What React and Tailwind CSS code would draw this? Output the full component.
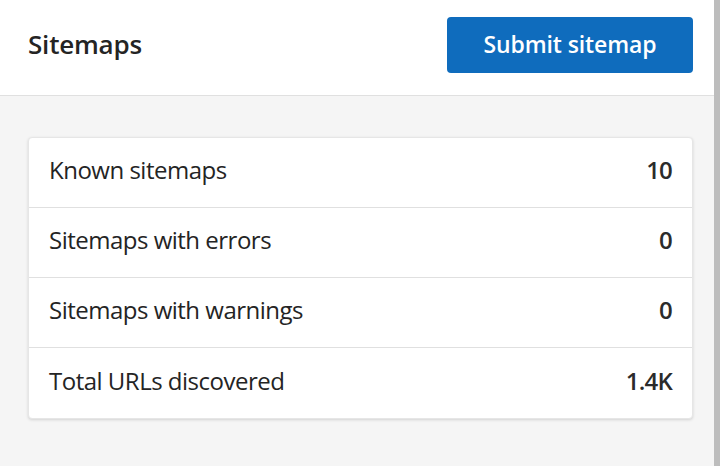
const rows = [
  { label: "Known sitemaps", value: "10" },
  { label: "Sitemaps with errors", value: "0" },
  { label: "Sitemaps with warnings", value: "0" },
  { label: "Total URLs discovered", value: "1.4K" },
];

export default function App() {
  return (
    <div className="flex h-[466px] w-[720px] overflow-hidden bg-[#f5f5f5] font-['Open_Sans',sans-serif] text-[#242424]">
      <div className="flex flex-1 flex-col">
        <header className="flex h-[96px] items-center justify-between border-b border-[#e0e0e0] bg-white pb-[6px] pl-[28px] pr-[21px]">
          <h1 className="text-[26px] font-semibold tracking-[-0.2px]">Sitemaps</h1>
          <button className="h-[56px] w-[246px] rounded-[4px] bg-[#0f6cbd] text-[23px] font-semibold tracking-[-0.1px] text-white">
            Submit sitemap
          </button>
        </header>

        <div className="pl-[28px] pr-[21px] pt-[41px]">
          <div className="overflow-hidden rounded-[4px] border border-[#e6e6e6] bg-white shadow-[0_1px_3px_rgba(0,0,0,0.14)]">
            {rows.map((row, i) => (
              <div
                key={i}
                className="flex h-[70px] items-center justify-between border-b border-[#e0e0e0] px-[20px] pb-[5px] text-[24px] tracking-[-0.5px] last:border-b-0"
              >
                <span>{row.label}</span>
                <span className="font-semibold tracking-[-0.8px] text-[#2b2b2b]">{row.value}</span>
              </div>
            ))}
          </div>
        </div>
      </div>
      <div className="w-[6px] bg-[#bdbdbd]" />
    </div>
  );
}
